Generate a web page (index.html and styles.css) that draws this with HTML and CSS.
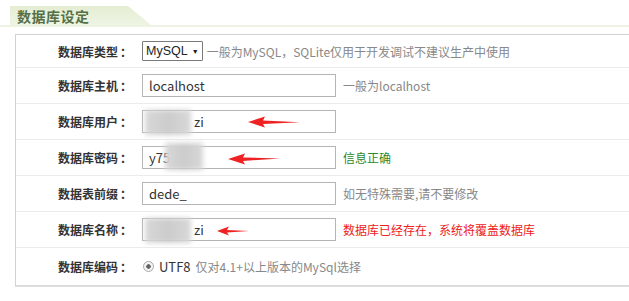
FILE: index.html
```html
<!DOCTYPE html>
<html lang="zh-CN">
<head>
    <meta charset="UTF-8">
    <title>数据库设定</title>
    <link rel="stylesheet" href="styles.css">
</head>
<body>
    <div class="page">
        <div class="tab-bar">
            <div class="tab">数据库设定</div>
        </div>
        <div class="panel">
            <div class="row">
                <div class="label">数据库类型<span class="colon">：</span></div>
                <div class="field">
                    <span class="select">MySQL <span class="caret">▼</span></span>
                    <span class="hint">一般为MySQL，SQLite仅用于开发调试不建议生产中使用</span>
                </div>
            </div>
            <div class="row">
                <div class="label">数据库主机<span class="colon">：</span></div>
                <div class="field">
                    <span class="input">localhost</span>
                    <span class="hint">一般为localhost</span>
                </div>
            </div>
            <div class="row">
                <div class="label">数据库用户<span class="colon">：</span></div>
                <div class="field">
                    <span class="input"><span class="masked"></span>zi</span>
                    <div class="blur blur-user"></div>
                    <svg class="arrow arrow-user" width="52" height="12" viewBox="0 0 52 12">
                        <path d="M0 6 L17 0.5 L15 4.5 L52 6.2 L15 8 L17 11.5 Z" fill="#ee2222"/>
                    </svg>
                </div>
            </div>
            <div class="row">
                <div class="label">数据库密码<span class="colon">：</span></div>
                <div class="field">
                    <span class="input">y75</span>
                    <div class="blur blur-pass"></div>
                    <svg class="arrow arrow-pass" width="52" height="12" viewBox="0 0 52 12">
                        <path d="M0 6 L17 0.5 L15 4.5 L52 5.5 L15 8 L17 11.5 Z" fill="#ee2222"/>
                    </svg>
                    <span class="hint ok">信息正确</span>
                </div>
            </div>
            <div class="row">
                <div class="label">数据表前缀<span class="colon">：</span></div>
                <div class="field">
                    <span class="input">dede_</span>
                    <span class="hint">如无特殊需要,请不要修改</span>
                </div>
            </div>
            <div class="row">
                <div class="label">数据库名称<span class="colon">：</span></div>
                <div class="field">
                    <span class="input"><span class="masked"></span>zi</span>
                    <div class="blur blur-name"></div>
                    <svg class="arrow arrow-name" width="32" height="10" viewBox="0 0 32 10">
                        <path d="M0 5 L12 0.5 L10 4 L32 5 L10 6.5 L12 9.5 Z" fill="#ee2222"/>
                    </svg>
                    <span class="hint error">数据库已经存在，系统将覆盖数据库</span>
                </div>
            </div>
            <div class="row last">
                <div class="label">数据库编码<span class="colon">：</span></div>
                <div class="field">
                    <span class="radio"></span>
                    <span class="radio-text">UTF8</span>
                    <span class="note">仅对4.1+以上版本的MySql选择</span>
                </div>
            </div>
        </div>
    </div>
</body>
</html>
```

FILE: styles.css
```css
body {
    margin: 0;
    padding: 0;
    background: #ffffff;
    font-family: "Noto Sans CJK SC", "Liberation Sans", sans-serif;
    font-size: 12px;
    color: #333333;
    overflow: hidden;
}
.page {
    padding-top: 6px;
}
.tab-bar {
    height: 19px;
    border-bottom: 2px solid #eef2e2;
    padding-left: 10px;
}
.tab {
    width: 141px;
    height: 19px;
    line-height: 21px;
    padding-left: 7px;
    box-sizing: border-box;
    background: linear-gradient(180deg, #e4edd2, #eef4e4);
    clip-path: polygon(0 0, 118px 0, 141px 100%, 0 100%);
    font-size: 14px;
    font-weight: bold;
    color: #557046;
    letter-spacing: 0.5px;
}
.panel {
    margin: 7px -20px 0 15px;
    border: 1px solid #d2d2d2;
    border-bottom-width: 2px;
    border-bottom-color: #dcdcdc;
}
.row {
    display: flex;
    align-items: center;
    height: 35px;
    border-bottom: 1px solid #ebebeb;
}
.row:first-child {
    height: 32px;
}
.row.last {
    border-bottom: none;
    height: 37px;
}
.label {
    width: 116px;
    text-align: right;
    font-weight: bold;
    font-size: 12px;
    color: #333333;
    flex-shrink: 0;
}
.colon {
    margin-left: 2px;
}
.field {
    position: relative;
    display: flex;
    align-items: center;
    margin-left: 10px;
    flex: 1;
    height: 100%;
}
.select {
    display: inline-block;
    height: 18px;
    line-height: 18px;
    padding: 0 3px;
    border: 1px solid #7a7a7a;
    border-radius: 1px;
    font-size: 12.5px;
    color: #222222;
    font-family: "Liberation Sans", Arial, sans-serif;
}
.caret {
    font-size: 7px;
    vertical-align: 1px;
    margin-left: 1px;
}
.input {
    display: inline-block;
    width: 194px;
    height: 23px;
    line-height: 22px;
    box-sizing: border-box;
    border: 1px solid #b5b5b5;
    padding-left: 6px;
    font-size: 13px;
    color: #333333;
    background: #ffffff;
    flex-shrink: 0;
}
.masked {
    display: inline-block;
    width: 45px;
}
.hint {
    margin-left: 7px;
    color: #888888;
    font-size: 12px;
}
.select + .hint {
    margin-left: 4px;
}
.hint.ok {
    color: #2a8a2a;
}
.hint.error {
    color: #ee2020;
}
.blur {
    position: absolute;
    background: linear-gradient(90deg, #d8d8d8, #cccccc 50%, #d8d8d8);
    filter: blur(2.5px);
}
.blur-user {
    left: 3px;
    top: 6px;
    width: 46px;
    height: 25px;
}
.blur-pass {
    left: 23px;
    top: 3px;
    width: 38px;
    height: 27px;
}
.blur-name {
    left: 3px;
    top: 6px;
    width: 46px;
    height: 25px;
}
.arrow {
    position: absolute;
}
.arrow-user {
    left: 106px;
    top: 12px;
}
.arrow-pass {
    left: 86px;
    top: 13px;
}
.arrow-name {
    left: 75px;
    top: 14px;
}
.radio {
    display: inline-block;
    width: 9px;
    height: 9px;
    border: 1px solid #a8a8a8;
    border-radius: 50%;
    background: radial-gradient(circle, #666666 0 2px, #f4f4f4 2.5px);
    margin-left: 1px;
}
.radio-text {
    margin-left: 5px;
    font-size: 13px;
    color: #333333;
}
.note {
    margin-left: 5px;
    color: #888888;
    font-size: 12px;
}
```
